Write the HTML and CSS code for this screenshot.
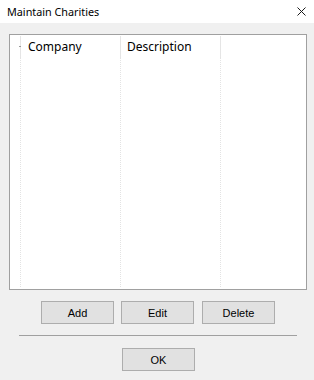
FILE: index.html
```html
<!DOCTYPE html>
<html>
<head>
<meta charset="utf-8">
<title>Maintain Charities</title>
<link rel="stylesheet" href="styles.css">
</head>
<body>
<div class="window">
  <div class="titlebar">
    <span class="title">Maintain Charities</span>
    <svg class="close" width="9" height="9" viewBox="0 0 9 9"><path d="M0.5 0.5 L8.5 8.5 M8.5 0.5 L0.5 8.5" stroke="#1a1a1a" stroke-width="1" fill="none"/></svg>
  </div>
  <div class="listwrap">
    <div class="list">
      <div class="col col-icon">
        <div class="head"><span class="tick"></span></div>
        <div class="body"></div>
      </div>
      <div class="col col-wide">
        <div class="head"><span class="htext">Company</span></div>
        <div class="body"></div>
      </div>
      <div class="col col-wide">
        <div class="head"><span class="htext htext-tight">Description</span></div>
        <div class="body"></div>
      </div>
    </div>
  </div>
  <div class="actions">
    <button class="btn">Add</button>
    <button class="btn">Edit</button>
    <button class="btn btn-delete">Delete</button>
  </div>
  <div class="separator"></div>
  <div class="okrow">
    <button class="btn">OK</button>
  </div>
</div>
</body>
</html>
```
FILE: styles.css
```css
html, body {
  margin: 0;
  padding: 0;
}
body {
  width: 314px;
  height: 380px;
  overflow: hidden;
  background: #f0f0f0;
  font-family: "Noto Sans", "Liberation Sans", sans-serif;
}
.window {
  display: flex;
  flex-direction: column;
}
.titlebar {
  height: 23px;
  background: #ffffff;
  display: flex;
  align-items: center;
  justify-content: space-between;
  padding: 0 8px 0 7px;
}
.title {
  font-size: 10.8px;
  color: #000;
  line-height: 14px;
}
.close {
  display: block;
}
.listwrap {
  padding: 11px 7px 0 9px;
}
.list {
  box-sizing: border-box;
  height: 256px;
  border: 1px solid #a0a0a0;
  background: #ffffff;
  display: flex;
  padding: 1px 0 2px 0;
}
.col {
  display: flex;
  flex-direction: column;
}
.col-icon {
  width: 11px;
}
.col-wide {
  width: 100px;
}
.head {
  box-sizing: border-box;
  height: 21px;
  border-right: 1px solid #e5e5e5;
  position: relative;
}
.body {
  flex: 1;
  border-right: 1px dotted #e3e3e3;
}
.htext {
  display: block;
  padding-left: 7px;
  font-size: 12px;
  line-height: 21px;
  color: #000;
}
.htext-tight {
  padding-left: 6px;
}
.tick {
  position: absolute;
  left: 9px;
  top: 10px;
  width: 2px;
  height: 1px;
  background: #9a9a9a;
}
.actions {
  display: flex;
  gap: 7px;
  padding-left: 41px;
  margin-top: 11px;
}
.btn {
  box-sizing: border-box;
  width: 73px;
  height: 23px;
  margin: 0;
  padding: 0;
  border: 1px solid #adadad;
  background: #e1e1e1;
  font-family: "Liberation Sans", Arial, sans-serif;
  font-size: 11px;
  color: #000;
  border-radius: 0;
}
.btn-delete {
  margin-left: 1px;
}
.separator {
  margin: 11px 0 0 19px;
  width: 278px;
  height: 1px;
  background: #a0a0a0;
}
.okrow {
  display: flex;
  padding-left: 122px;
  margin-top: 12px;
}
```
